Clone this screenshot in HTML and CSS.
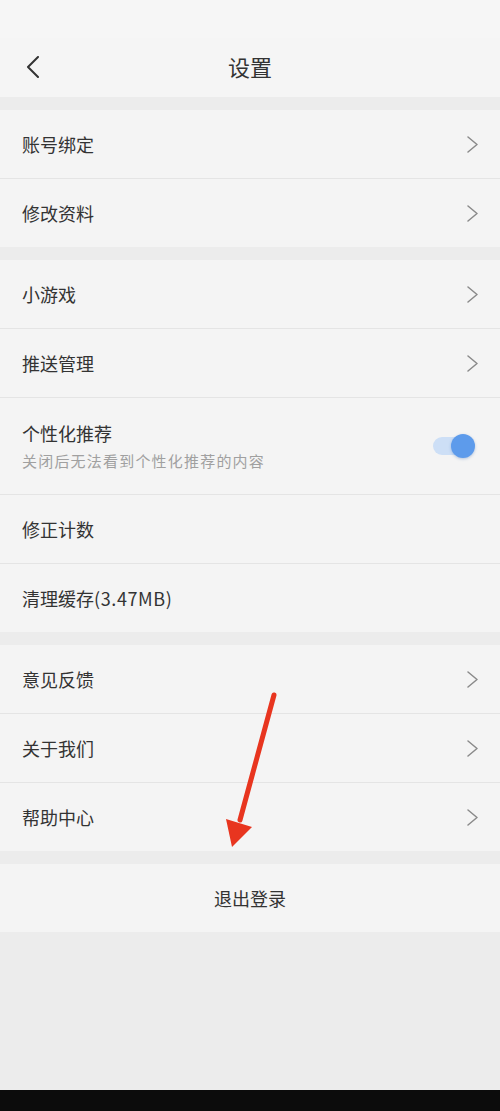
FILE: index.html
```html
<!DOCTYPE html>
<html lang="zh-CN">
<head>
<meta charset="utf-8">
<title>设置</title>
<link rel="stylesheet" href="styles.css">
</head>
<body>
<div class="screen">
  <div class="status"></div>
  <header class="nav">
    <svg class="back" viewBox="0 0 14 22" width="14" height="22">
      <path d="M12 1 L2 11 L12 21" fill="none" stroke="#333" stroke-width="2" stroke-linecap="round" stroke-linejoin="round"/>
    </svg>
    <h1 class="title">设置</h1>
  </header>

  <section class="group">
    <div class="row"><span class="label">账号绑定</span><svg class="chev" viewBox="0 0 11 17" width="11" height="17"><path d="M1 1 L10 8.5 L1 16"/></svg></div>
    <div class="row"><span class="label">修改资料</span><svg class="chev" viewBox="0 0 11 17" width="11" height="17"><path d="M1 1 L10 8.5 L1 16"/></svg></div>
  </section>

  <section class="group">
    <div class="row"><span class="label">小游戏</span><svg class="chev" viewBox="0 0 11 17" width="11" height="17"><path d="M1 1 L10 8.5 L1 16"/></svg></div>
    <div class="row"><span class="label">推送管理</span><svg class="chev" viewBox="0 0 11 17" width="11" height="17"><path d="M1 1 L10 8.5 L1 16"/></svg></div>
    <div class="row tall">
      <div class="stack">
        <span class="label">个性化推荐</span>
        <span class="sub">关闭后无法看到个性化推荐的内容</span>
      </div>
      <span class="toggle"><span class="knob"></span></span>
    </div>
    <div class="row"><span class="label">修正计数</span></div>
    <div class="row"><span class="label">清理缓存<span class="num">(3.47MB)</span></span></div>
  </section>

  <section class="group">
    <div class="row"><span class="label">意见反馈</span><svg class="chev" viewBox="0 0 11 17" width="11" height="17"><path d="M1 1 L10 8.5 L1 16"/></svg></div>
    <div class="row"><span class="label">关于我们</span><svg class="chev" viewBox="0 0 11 17" width="11" height="17"><path d="M1 1 L10 8.5 L1 16"/></svg></div>
    <div class="row"><span class="label">帮助中心</span><svg class="chev" viewBox="0 0 11 17" width="11" height="17"><path d="M1 1 L10 8.5 L1 16"/></svg></div>
  </section>

  <section class="group">
    <div class="row center"><span class="label">退出登录</span></div>
  </section>

  <div class="filler"></div>
  <div class="homebar"></div>

  <svg class="arrow" viewBox="0 0 80 170" width="80" height="170">
    <line x1="64" y1="5" x2="30" y2="130" stroke="#e8351f" stroke-width="5" stroke-linecap="round"/>
    <polygon points="16,129 42,137 22,157" fill="#e8351f"/>
  </svg>
</div>
</body>
</html>
```

FILE: styles.css
```css
* { box-sizing: border-box; }

html, body {
  margin: 0;
  padding: 0;
}

body {
  font-family: "Noto Sans CJK SC", "Noto Sans", sans-serif;
  color: #333;
  background: #ececec;
}

.screen {
  position: relative;
  width: 500px;
  height: 1111px;
  display: flex;
  flex-direction: column;
  background: #ececec;
  overflow: hidden;
}

.status {
  height: 38px;
  background: #f6f6f6;
}

.nav {
  height: 59px;
  display: flex;
  align-items: center;
  justify-content: center;
  position: relative;
  background: #f5f5f5;
}

.back {
  position: absolute;
  left: 26px;
  top: 18px;
}

.title {
  margin: 0 0 3px;
  font-size: 22px;
  font-weight: 400;
  color: #333;
  line-height: 1;
}

.group {
  margin-top: 13px;
  background: #f4f4f4;
}

.row {
  height: 68px;
  padding: 0 22px;
  display: flex;
  align-items: center;
  justify-content: space-between;
}

.row + .row {
  height: 69px;
  border-top: 1px solid #e4e4e4;
}

.row.tall {
  height: 97px;
}

.row.center {
  justify-content: center;
}

.label {
  font-size: 18px;
  line-height: 1;
  color: #333;
}

.num {
  letter-spacing: 0.6px;
}

.stack {
  display: flex;
  flex-direction: column;
  gap: 11px;
}

.sub {
  font-size: 15px;
  letter-spacing: 1.2px;
  line-height: 1;
  color: #a0a0a0;
}

.chev {
  fill: none;
  stroke: #8a8a8a;
  stroke-width: 1.5;
  stroke-linecap: round;
  stroke-linejoin: round;
}

.toggle {
  position: relative;
  width: 38px;
  height: 18px;
  border-radius: 9px;
  background: #cddff6;
  margin-right: 7px;
}

.knob {
  position: absolute;
  right: -4px;
  top: -3px;
  width: 24px;
  height: 24px;
  border-radius: 50%;
  background: #5d9beb;
  box-shadow: 0 1px 3px rgba(60, 110, 180, 0.35);
}

.filler {
  flex: 1;
  background: #ececec;
}

.homebar {
  height: 21px;
  background: #0c0c0c;
}

.arrow {
  position: absolute;
  left: 210px;
  top: 690px;
}
```
